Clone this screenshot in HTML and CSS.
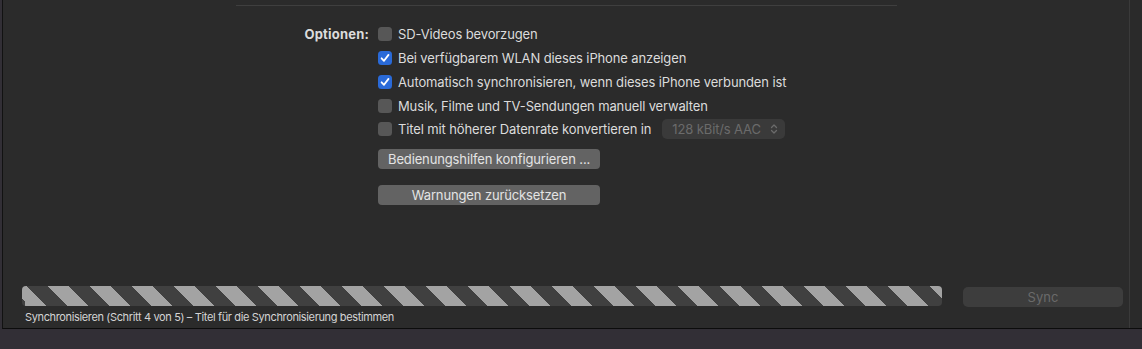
FILE: index.html
```html
<!DOCTYPE html>
<html lang="de">
<head>
<meta charset="utf-8">
<title>iPhone Optionen</title>
<link rel="stylesheet" href="styles.css">
</head>
<body>
<div class="window">
  <div class="app">
    <div class="content">
      <div class="section-rule"></div>
      <div class="options">
        <div class="label">Optionen:</div>
        <div class="row r24"><span class="cb"></span><span>SD-Videos bevorzugen</span></div>
        <div class="row r24"><span class="cb on"><svg viewBox="0 0 14 14"><path d="M3.6 7.3 L6 9.8 L10.5 3.9" /></svg></span><span>Bei verfügbarem WLAN dieses iPhone anzeigen</span></div>
        <div class="row r24"><span class="cb on"><svg viewBox="0 0 14 14"><path d="M3.6 7.3 L6 9.8 L10.5 3.9" /></svg></span><span>Automatisch synchronisieren, wenn dieses iPhone verbunden ist</span></div>
        <div class="row r23"><span class="cb"></span><span>Musik, Filme und TV-Sendungen manuell verwalten</span></div>
        <div class="row r23"><span class="cb"></span><span>Titel mit höherer Datenrate konvertieren in</span>
          <span class="popup"><span>128 kBit/s AAC</span><svg class="chev" viewBox="0 0 8 12"><path d="M1.5 4.5 L4 2 L6.5 4.5 M1.5 7.5 L4 10 L6.5 7.5" /></svg></span>
        </div>
        <button class="btn btn-first">Bedienungshilfen konfigurieren ...</button>
        <button class="btn btn-second">Warnungen zurücksetzen</button>
      </div>
      <div class="footer">
        <div class="bar-row">
          <div class="progress"></div>
          <button class="sync">Sync</button>
        </div>
        <div class="status">Synchronisieren (Schritt 4 von 5) – Titel für die Synchronisierung bestimmen</div>
      </div>
    </div>
    <div class="edge"></div>
  </div>
</div>
</body>
</html>
```
FILE: styles.css
```css
html, body {
  margin: 0;
  padding: 0;
}
body {
  background: #322f36;
  font-family: Inter, "Noto Sans", "Liberation Sans", sans-serif;
  color: #dcdcdc;
  width: 1142px;
  height: 349px;
  overflow: hidden;
}
.window {
  height: 349px;
}
.app {
  margin-left: 2px;
  border-left: 1px solid #121212;
  border-bottom: 1px solid #0c0c0c;
  background: #2b2b2b;
  display: flex;
  box-sizing: border-box;
  height: 329px;
}
.content {
  flex: 1;
  display: flex;
  flex-direction: column;
}
.edge {
  width: 12px;
  border-left: 1px solid #3a3a3a;
  background: #2a2a2a;
}
.section-rule {
  margin: 5px 0 0 233px;
  width: 661px;
  height: 1px;
  background: #3f3f3f;
}
.options {
  margin: 16px 0 0 233px;
  display: grid;
  grid-template-columns: 133px auto;
  column-gap: 9px;
  font-size: 13px;
  letter-spacing: -0.13px;
}
.label {
  grid-column: 1;
  grid-row: 1;
  text-align: right;
  font-weight: 700;
  letter-spacing: 0.2px;
  line-height: 24px;
}
.row {
  grid-column: 2;
  display: flex;
  align-items: center;
  gap: 6px;
}
.r24 { height: 24px; }
.r23 { height: 23px; }
.cb {
  width: 14px;
  height: 14px;
  border-radius: 3.5px;
  background: #575757;
  display: inline-flex;
  flex: none;
}
.cb.on {
  background: #2a6ad8;
}
.cb svg {
  width: 14px;
  height: 14px;
  fill: none;
  stroke: #ffffff;
  stroke-width: 1.8;
  stroke-linecap: round;
  stroke-linejoin: round;
}
.popup {
  margin-left: 5px;
  width: 123px;
  height: 20px;
  box-sizing: border-box;
  border-radius: 5px;
  background: #3a3a3a;
  color: #6b6b6b;
  display: flex;
  align-items: center;
  justify-content: space-between;
  padding: 0 7px 0 10px;
}
.chev {
  width: 8px;
  height: 12px;
  fill: none;
  stroke: #6b6b6b;
  stroke-width: 1.3;
  stroke-linecap: round;
  stroke-linejoin: round;
}
.btn {
  grid-column: 2;
  justify-self: start;
  width: 222px;
  height: 20px;
  border: none;
  border-radius: 4px;
  background: #636363;
  color: #e4e4e4;
  font-family: inherit;
  font-size: 13px;
  letter-spacing: -0.13px;
  padding: 0;
  line-height: 20px;
}
.btn-first {
  margin-top: 9px;
  text-align: left;
  padding-left: 10px;
}
.btn-second {
  margin-top: 16px;
  text-align: center;
}
.footer {
  margin-top: auto;
  padding-bottom: 4px;
}
.bar-row {
  display: flex;
  align-items: flex-start;
  gap: 21px;
  margin-left: 19px;
}
.progress {
  width: 920px;
  height: 20px;
  border-radius: 4px;
  background: repeating-linear-gradient(45deg, #a3a3a3 0 14.85px, #404040 14.85px 29.7px);
  background-position: 3px 0;
}
.sync {
  margin-top: 1px;
  width: 160px;
  height: 20px;
  border: none;
  border-radius: 5px;
  background: #3d3d3d;
  color: #6a6a6a;
  font-family: inherit;
  font-size: 13px;
  padding: 0;
}
.status {
  margin: 3px 0 0 22px;
  font-size: 11px;
  letter-spacing: -0.36px;
  line-height: 14px;
  color: #d4d4d4;
}
```
